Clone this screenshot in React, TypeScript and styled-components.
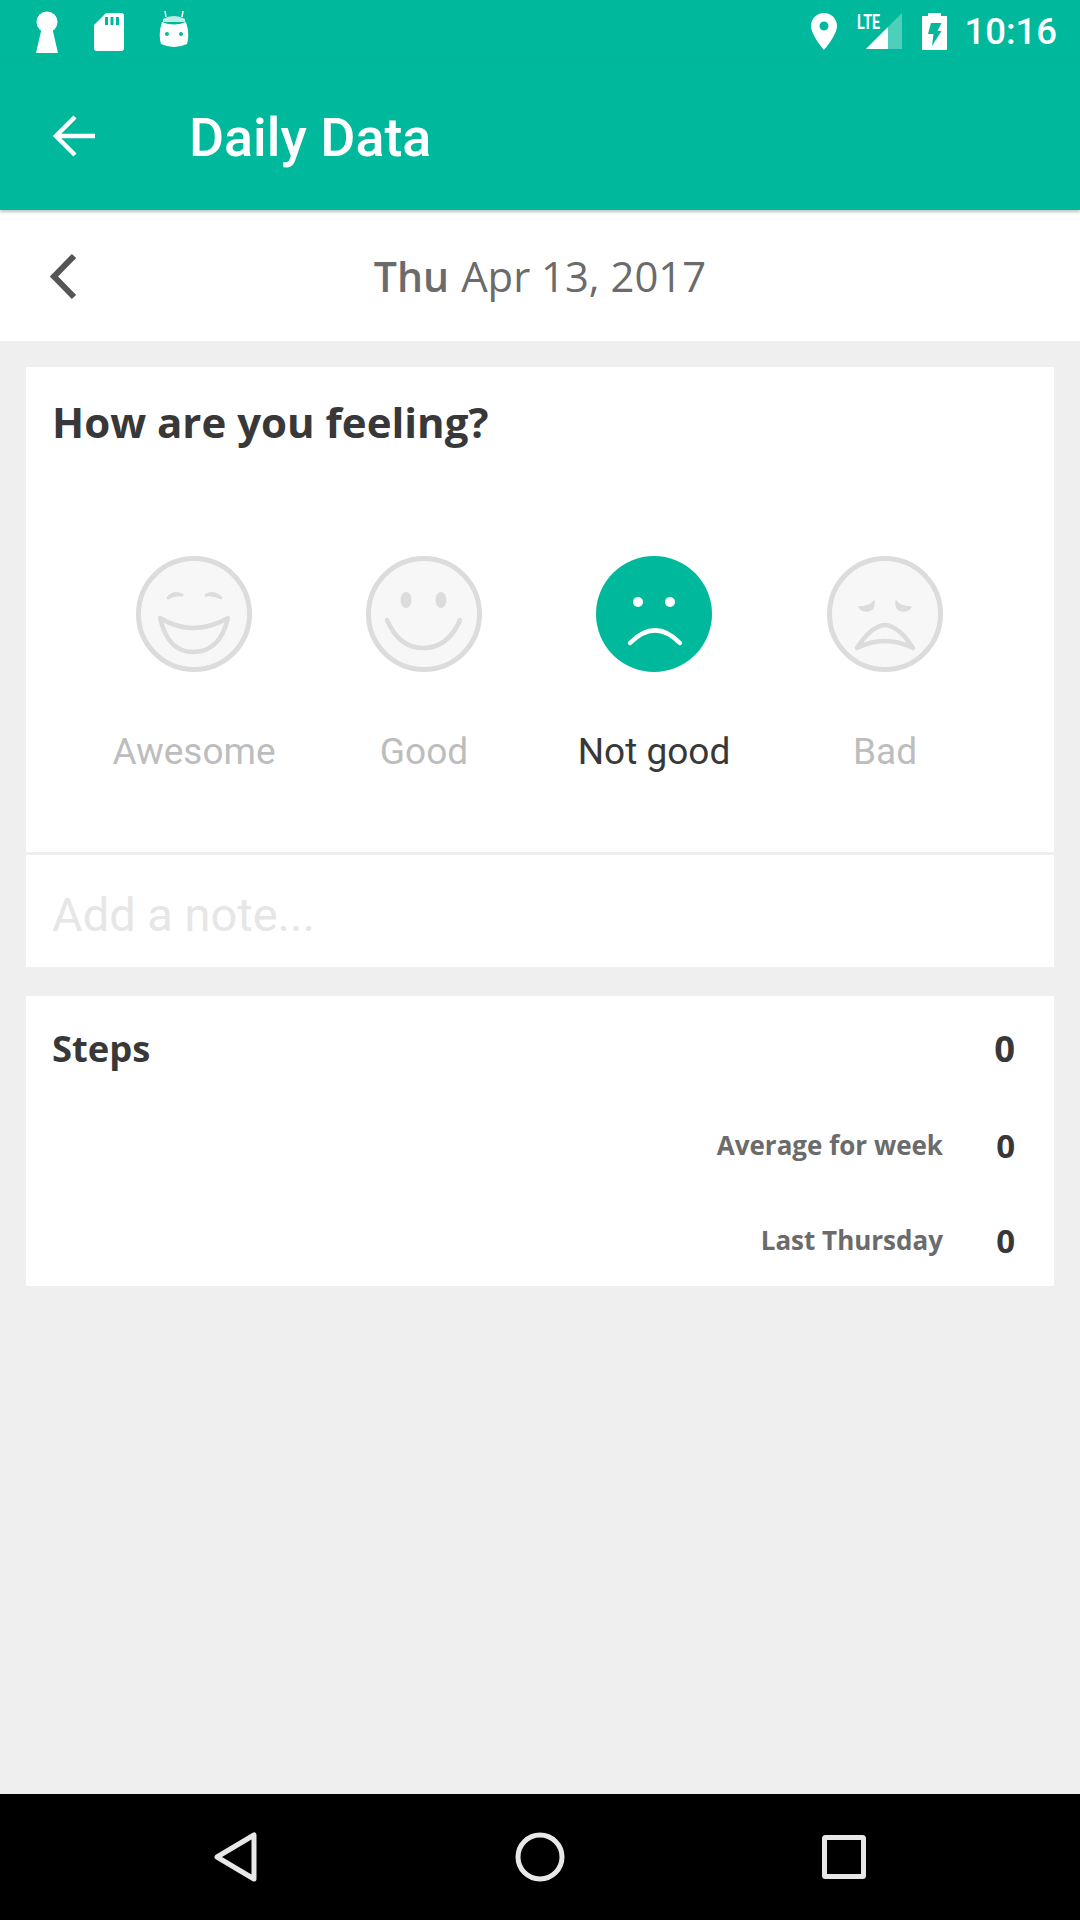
import { type FC } from "react";
import styled, { createGlobalStyle } from "styled-components";

const GlobalStyle = createGlobalStyle`
  html, body {
    margin: 0;
    padding: 0;
    background: #efefef;
  }
`;

const Page = styled.div`
  display: flex;
  flex-direction: column;
  width: 1080px;
  height: 1920px;
  overflow: hidden;
  font-family: Roboto, sans-serif;
  background: #efefef;
`;

const StatusBar = styled.div`
  display: flex;
  align-items: center;
  justify-content: space-between;
  height: 63px;
  padding: 0 23px 0 35px;
  flex-shrink: 0;
  background: #00b89c;
`;

const StatusGroup = styled.div`
  display: flex;
  align-items: center;
  gap: ${(p: { $gap: number }) => p.$gap}px;
`;

const AndroidIcon = styled.svg`
  margin-bottom: 5px;
`;

const Clock = styled.span`
  margin-left: -3px;
  font-size: 36.5px;
  font-weight: 500;
  line-height: 63px;
  color: #fff;
`;

const Toolbar = styled.header`
  position: relative;
  z-index: 1;
  display: flex;
  align-items: center;
  gap: 93px;
  height: 147px;
  padding: 0 0 2px 52px;
  box-sizing: border-box;
  flex-shrink: 0;
  background: #00b89c;
  box-shadow: 0 2px 3px rgba(0, 0, 0, 0.25);
`;

const ToolbarTitle = styled.h1`
  margin: 0;
  padding-top: 3px;
  font-size: 53.8px;
  font-weight: 500;
  color: #fff;
`;

const DateBar = styled.div`
  position: relative;
  display: flex;
  align-items: center;
  justify-content: center;
  height: 131px;
  flex-shrink: 0;
  background: #fff;
  font-family: "Open Sans", sans-serif;
  font-size: 41.8px;
  color: #6b6b6b;
`;

const PrevDay = styled.svg`
  position: absolute;
  left: 48px;
  top: 43px;
`;

const DayName = styled.span`
  margin-right: 12px;
  font-size: 41px;
  font-weight: 600;
`;

const Content = styled.main`
  display: flex;
  flex: 1;
  flex-direction: column;
  gap: 29px;
  padding: 26px;
`;

const Card = styled.section`
  display: flex;
  flex-direction: column;
  background: #fff;
`;

const Question = styled.h2`
  margin: 0;
  padding: 26px 26px 0;
  height: 154px;
  box-sizing: border-box;
  font-family: "Open Sans", sans-serif;
  font-size: 42px;
  line-height: 58px;
  font-weight: 700;
  color: #383838;
`;

const Moods = styled.div`
  display: grid;
  grid-template-columns: 230px 230px 230px 232px;
  padding: 0 53px;
  height: 331px;
  border-bottom: 3px solid #efefef;
`;

const Mood = styled.div`
  display: flex;
  flex-direction: column;
  align-items: center;
  gap: 58px;
  padding-top: 35px;
`;

const MoodLabel = styled.span<{ $active?: boolean }>`
  font-size: 37px;
  line-height: 44px;
  color: ${(p) => (p.$active ? "#383838" : "#bdbdbd")};
`;

const NotePlaceholder = styled.div`
  height: 112px;
  padding: 4px 26px 0;
  box-sizing: border-box;
  font-size: 47px;
  line-height: 112px;
  color: #e6e6e6;
`;

const StepsCard = styled(Card)`
  height: 290px;
  box-sizing: border-box;
  gap: 41px;
  padding: 25px 39px 0 26px;
  font-family: "Open Sans", sans-serif;
  font-weight: 700;
`;

const StepsRow = styled.div`
  display: flex;
  align-items: center;
  justify-content: space-between;
  height: 54px;
  margin-bottom: 2px;
  flex-shrink: 0;
  font-size: 36.4px;
  color: #383838;
`;

const CompareRow = styled.div`
  display: flex;
  align-items: center;
  justify-content: flex-end;
  height: 54px;
  flex-shrink: 0;
`;

const CompareLabel = styled.span`
  font-size: 26px;
  color: #6b6b6b;
`;

const CompareValue = styled.span`
  width: 72px;
  text-align: right;
  font-size: 33px;
  color: #383838;
`;

const NavBar = styled.nav`
  display: flex;
  align-items: center;
  justify-content: center;
  height: 126px;
  flex-shrink: 0;
  background: #000;
`;

const NavSlot = styled.div`
  display: flex;
  width: 304px;
  justify-content: center;
`;

const FACE_STROKE = "#dcdcdc";

const FaceCircle: FC<{ active?: boolean }> = ({ active }) =>
  active ? (
    <circle cx="58" cy="58" r="58" fill="#00b89c" />
  ) : (
    <circle cx="58" cy="58" r="55.5" fill="#f7f7f7" stroke={FACE_STROKE} strokeWidth="5" />
  );

const Face: FC<{ mood: string; active?: boolean }> = ({ mood, active }) => (
  <svg width="116" height="116" viewBox="0 0 116 116" fill="none" strokeLinecap="round" strokeLinejoin="round">
    <FaceCircle active={active} />
    {mood === "Awesome" && (
      <g stroke={FACE_STROKE} strokeWidth="4.5">
        <path d="M32 42Q38 35 46 39Q38 38 32 42Z" fill={FACE_STROKE} strokeWidth="3" />
        <path d="M70 39Q78 35 85 42Q78 38 70 39Z" fill={FACE_STROKE} strokeWidth="3" />
        <path d="M24 62Q57 82 92 62Q84 96 57 96Q32 96 24 62Z" />
      </g>
    )}
    {mood === "Good" && (
      <g>
        <ellipse cx="40" cy="44" rx="5.5" ry="8" fill={FACE_STROKE} />
        <ellipse cx="75" cy="44" rx="5.5" ry="8" fill={FACE_STROKE} />
        <path d="M21 64Q33 92 57 92Q82 92 94 64" stroke={FACE_STROKE} strokeWidth="4.5" />
      </g>
    )}
    {mood === "Not good" && (
      <g>
        <circle cx="42" cy="46" r="5" fill="#fff" />
        <circle cx="74" cy="46" r="5" fill="#fff" />
        <path d="M34 87Q59 62 84 87" stroke="#fff" strokeWidth="4.5" />
      </g>
    )}
    {mood === "Bad" && (
      <g stroke={FACE_STROKE} strokeWidth="4.5">
        <path d="M32 51Q43 51 47 45Q48 54 40 55Q34 55 32 51Z" fill={FACE_STROKE} strokeWidth="1.5" />
        <path d="M84 51Q73 51 69 45Q68 54 76 55Q82 55 84 51Z" fill={FACE_STROKE} strokeWidth="1.5" />
        <path d="M30 92Q44 70 58 69Q72 70 86 92Q58 78 30 92Z" />
      </g>
    )}
  </svg>
);

const MOODS = ["Awesome", "Good", "Not good", "Bad"];

export default function App() {
  return (
    <Page>
      <GlobalStyle />
      <StatusBar>
        <StatusGroup $gap={35}>
          <svg width="24" height="42" viewBox="0 0 24 42" fill="#fff">
            <circle cx="12" cy="11" r="10.5" />
            <path d="M7 16H17L23 42H1Z" />
          </svg>
          <svg width="30" height="38" viewBox="0 0 30 38" fill="#fff">
            <path fillRule="evenodd" d="M12 0H27Q30 0 30 3V35Q30 38 27 38H3Q0 38 0 35V12ZM11 4V12H14V4ZM16.5 4V12H19.5V4ZM22 4V12H25V4Z" />
          </svg>
          <AndroidIcon width="30" height="38" viewBox="0 0 30 38">
            <path d="M6 1L7 7M24 1L23 7" stroke="#fff" strokeWidth="1.5" />
            <path d="M4 9Q15 3 26 9V12H4Z" fill="#bdeee6" />
            <path fillRule="evenodd" fill="#fff" d="M3 12Q15 17 27 12Q31 24 28 34Q15 40 2 34Q-1 24 3 12ZM8 22A2 2 0 1 0 8 26A2 2 0 1 0 8 22ZM22 22A2 2 0 1 0 22 26A2 2 0 1 0 22 22Z" />
          </AndroidIcon>
        </StatusGroup>
        <StatusGroup $gap={20}>
          <svg width="26" height="37" viewBox="0 0 26 37">
            <path fillRule="evenodd" fill="#fff" d="M13 0C5.8 0 0 5.8 0 13C0 22 13 37 13 37S26 22 26 13C26 5.8 20.2 0 13 0ZM13 8.5A4.5 4.5 0 1 1 13 17.5A4.5 4.5 0 1 1 13 8.5Z" />
          </svg>
          <svg width="45" height="49" viewBox="0 -6 45 49">
            <path d="M45 0V36H9Z" fill="#4dcfbb" />
            <path d="M31 14V36H9Z" fill="#fff" />
            <text x="0" y="16" fontFamily="Roboto, sans-serif" fontWeight="700" fontSize="21" textLength="23" lengthAdjust="spacingAndGlyphs" fill="#fff">LTE</text>
          </svg>
          <svg width="25" height="37" viewBox="0 0 25 37">
            <path fillRule="evenodd" fill="#fff" d="M6 0H19V3H25V37H0V3H6ZM9 10H19.5L15.5 18H19.5L10 33L11.5 21H6Z" />
          </svg>
          <Clock>10:16</Clock>
        </StatusGroup>
      </StatusBar>

      <Toolbar>
        <svg width="44" height="44" viewBox="0 0 44 44" fill="none" stroke="#fff" strokeWidth="4.5">
          <path d="M43 22H4M23 3L4 22L23 41" />
        </svg>
        <ToolbarTitle>Daily Data</ToolbarTitle>
      </Toolbar>

      <DateBar>
        <PrevDay width="32" height="48" viewBox="0 0 32 48" fill="none" stroke="#555" strokeWidth="6">
          <path d="M26 3L6 23.5L26 44" />
        </PrevDay>
        <DayName>Thu</DayName>
        Apr 13, 2017
      </DateBar>

      <Content>
        <Card>
          <Question>How are you feeling?</Question>
          <Moods>
            {MOODS.map((mood) => (
              <Mood key={mood}>
                <Face mood={mood} active={mood === "Not good"} />
                <MoodLabel $active={mood === "Not good"}>{mood}</MoodLabel>
              </Mood>
            ))}
          </Moods>
          <NotePlaceholder>Add a note...</NotePlaceholder>
        </Card>

        <StepsCard>
          <StepsRow>
            <span>Steps</span>
            <span>0</span>
          </StepsRow>
          <CompareRow>
            <CompareLabel>Average for week</CompareLabel>
            <CompareValue>0</CompareValue>
          </CompareRow>
          <CompareRow>
            <CompareLabel>Last Thursday</CompareLabel>
            <CompareValue>0</CompareValue>
          </CompareRow>
        </StepsCard>
      </Content>

      <NavBar>
        <NavSlot>
          <svg width="44" height="52" viewBox="0 0 44 52" fill="none" stroke="#e8e8e8" strokeWidth="5" strokeLinejoin="round">
            <path d="M40 4V48L3 26Z" />
          </svg>
        </NavSlot>
        <NavSlot>
          <svg width="50" height="50" viewBox="0 0 50 50" fill="none" stroke="#e8e8e8" strokeWidth="5">
            <circle cx="25" cy="25" r="22" />
          </svg>
        </NavSlot>
        <NavSlot>
          <svg width="44" height="44" viewBox="0 0 44 44" fill="none" stroke="#e8e8e8" strokeWidth="5" strokeLinejoin="round">
            <rect x="2.5" y="2.5" width="39" height="39" rx="1" />
          </svg>
        </NavSlot>
      </NavBar>
    </Page>
  );
}
